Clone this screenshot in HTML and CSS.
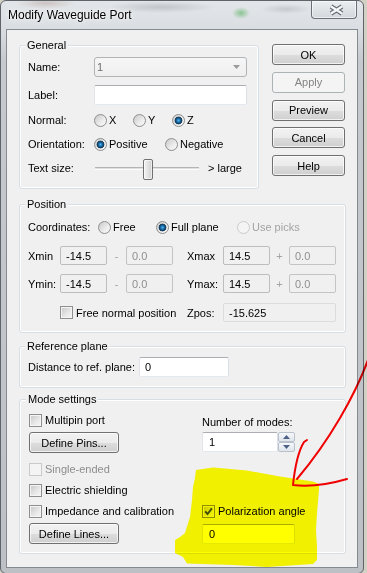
FILE: index.html
```html
<!DOCTYPE html>
<html>
<head>
<meta charset="utf-8">
<title>Modify Waveguide Port</title>
<link rel="stylesheet" href="styles.css">
</head>
<body>
<div class="window">
  <div class="titlebar">
    <span class="title">Modify Waveguide Port</span>
    <div class="close">
      <svg width="17" height="12" viewBox="0 0 17 12"><path d="M3 2.5 L14 9.5 M14 2.5 L3 9.5" stroke="#676c72" stroke-width="4.6" fill="none"/><path d="M3 2.5 L14 9.5 M14 2.5 L3 9.5" stroke="#f7f8f9" stroke-width="2.2" fill="none"/></svg>
    </div>
  </div>
  <div class="client">
    <div class="top-row">
      <div class="group general">
        <div class="group-title">General</div>
        <div class="row r-name">
          <span class="lbl">Name:</span>
          <div class="combo"><span>1</span><svg width="7" height="4" viewBox="0 0 7 4"><path d="M0 0 L7 0 L3.5 4 Z" fill="#9c9c9c"/></svg></div>
        </div>
        <div class="row r-label">
          <span class="lbl">Label:</span>
          <div class="textbox label-input"></div>
        </div>
        <div class="row r-normal">
          <span class="lbl">Normal:</span>
          <span class="opt w39"><span class="radio"></span>X</span>
          <span class="opt w39"><span class="radio"></span>Y</span>
          <span class="opt"><span class="radio checked"></span>Z</span>
        </div>
        <div class="row r-orient">
          <span class="lbl">Orientation:</span>
          <span class="opt w71"><span class="radio checked"></span>Positive</span>
          <span class="opt"><span class="radio"></span>Negative</span>
        </div>
        <div class="row r-text">
          <span class="lbl">Text size:</span>
          <div class="slider"><div class="groove"></div><div class="thumb"></div></div>
          <span class="slider-note">&gt; large</span>
        </div>
      </div>
      <div class="buttons">
        <div class="btn">OK</div>
        <div class="btn disabled">Apply</div>
        <div class="btn">Preview</div>
        <div class="btn">Cancel</div>
        <div class="btn">Help</div>
      </div>
    </div>

    <div class="group position">
      <div class="group-title">Position</div>
      <div class="row coords">
        <span class="lbl-c">Coordinates:</span>
        <span class="opt w58"><span class="radio"></span>Free</span>
        <span class="opt w81"><span class="radio checked"></span>Full plane</span>
        <span class="opt dim"><span class="radio disabled"></span>Use picks</span>
      </div>
      <div class="pos-row r-x">
        <span>Xmin</span>
        <div class="field">-14.5</div>
        <span class="sep">-</span>
        <div class="field dis">0.0</div>
        <span></span>
        <span>Xmax</span>
        <div class="field">14.5</div>
        <span class="sep">+</span>
        <div class="field dis">0.0</div>
      </div>
      <div class="pos-row r-y">
        <span>Ymin:</span>
        <div class="field">-14.5</div>
        <span class="sep">-</span>
        <div class="field dis">0.0</div>
        <span></span>
        <span>Ymax:</span>
        <div class="field">14.5</div>
        <span class="sep">+</span>
        <div class="field dis">0.0</div>
      </div>
      <div class="pos-row r-free">
        <span class="opt free-opt"><span class="check"></span>Free normal position</span>
        <span class="zpos-lbl">Zpos:</span>
        <div class="field ro">-15.625</div>
      </div>
    </div>

    <div class="group ref">
      <div class="group-title">Reference plane</div>
      <div class="row r-ref">
        <span class="lbl-r">Distance to ref. plane:</span>
        <div class="textbox ref-input">0</div>
      </div>
    </div>

    <div class="group mode">
      <div class="group-title">Mode settings</div>
      <div class="mode-body">
        <div class="mode-left">
          <span class="opt cb-row"><span class="check"></span>Multipin port</span>
          <div class="btn btn-define">Define Pins...</div>
          <span class="opt cb-row mt8 dim2"><span class="check disabled"></span>Single-ended</span>
          <span class="opt cb-row mt5"><span class="check"></span>Electric shielding</span>
          <span class="opt cb-row mt5"><span class="check"></span>Impedance and calibration</span>
          <div class="btn btn-define mt4">Define Lines...</div>
        </div>
        <div class="mode-right">
          <div class="nm-label">Number of modes:</div>
          <div class="spin">
            <div class="textbox spin-input">1</div>
            <div class="spin-btns">
              <div class="spin-btn"><svg width="7" height="4" viewBox="0 0 7 4"><path d="M0 4 L3.5 0 L7 4 Z" fill="#4e6287"/></svg></div>
              <div class="spin-btn"><svg width="7" height="4" viewBox="0 0 7 4"><path d="M0 0 L7 0 L3.5 4 Z" fill="#4e6287"/></svg></div>
            </div>
          </div>
          <span class="opt cb-row pol"><span class="check"><svg width="9" height="9" viewBox="0 0 9 9"><path d="M1.2 4.4 L3.5 7 L7.9 1.4" stroke="#3f4f46" stroke-width="1.9" fill="none"/></svg></span>Polarization angle</span>
          <div class="textbox pol-input">0</div>
        </div>
      </div>
    </div>
  </div>
</div>

<svg class="overlay" width="367" height="573" viewBox="0 0 367 573">
  <path d="M196,470 L213,467.5 L247,470.5 L280,476.5 L313,481.5 L319,484 L319,490 L317,513 L316,530 L317,547 L317,560 L313,564 L267,567 L233,565 L187,563.5 L183,557 L175,553 L175,540 L180,537 L185,533 L190,517 L192,500 L193,487 L195,478 Z" fill="#ffff00"/>
  <path d="M368,360 C355,395 330,440 297,479" stroke="#ff0000" stroke-width="2" fill="none" stroke-linecap="round"/>
  <path d="M307,440 L304,442 C299,450 295,466 293,485 C310,487 330,484 347,479" stroke="#ff0000" stroke-width="2" fill="none" stroke-linecap="round" stroke-linejoin="round"/>
</svg>
</body>
</html>
```

FILE: styles.css
```css
* { box-sizing: border-box; }
html, body { margin: 0; padding: 0; }
body {
  width: 367px;
  height: 573px;
  overflow: hidden;
  position: relative;
  background: #d3d0c4;
  font-family: "Liberation Sans", Arial, sans-serif;
  font-size: 11px;
  color: #000;
}

.window {
  width: 364px;
  height: 574px;
  border: 1px solid #5f646a;
  border-radius: 6px;
  display: flex;
  flex-direction: column;
  background:
    radial-gradient(ellipse 30px 6px at 45px 2px, rgba(150, 115, 105, 0.30), rgba(150, 115, 105, 0)),
    radial-gradient(ellipse 55px 6px at 160px 6px, rgba(120, 125, 130, 0.30), rgba(120, 125, 130, 0)),
    radial-gradient(ellipse 9px 6px at 240px 12px, rgba(70, 170, 80, 0.55), rgba(70, 170, 80, 0)),
    radial-gradient(ellipse 25px 5px at 285px 8px, rgba(130, 135, 140, 0.28), rgba(130, 135, 140, 0)),
    linear-gradient(180deg, #e3e6e9 0, #dadee2 28px, #c6cacf 60px, #bdc1c5 100%);
}

.titlebar {
  flex: none;
  height: 28px;
  display: flex;
  align-items: flex-start;
}
.title {
  padding-left: 7px;
  line-height: 28px;
  font-size: 12px;
  color: #000;
  text-shadow: 0 0 7px #fff, 0 0 3px rgba(255, 255, 255, 0.8);
}
.close {
  margin-left: auto;
  margin-right: 6px;
  width: 46px;
  height: 18px;
  border: 1px solid #6c7177;
  border-top: none;
  border-radius: 0 0 4px 4px;
  background: linear-gradient(180deg, #eceef0, #d3d7db);
  box-shadow: inset 0 0 0 1px rgba(255, 255, 255, 0.55);
  display: flex;
  align-items: center;
  justify-content: center;
  padding: 1px 0 0 4px;
}

.client {
  flex: none;
  height: 539px;
  margin: 0 5px;
  border: 1px solid #858a90;
  background: #f0f0f0;
  padding: 0 11px 0 12px;
}

.top-row { display: flex; align-items: flex-start; }

.group {
  border: 1px solid #d5dfe5;
  border-radius: 3px;
  box-shadow: inset 0 0 0 1px #fff;
  padding: 0 8px 0 8px;
}
.group-title {
  width: max-content;
  height: 14px;
  line-height: 14px;
  margin: -8px 0 0 -3px;
  padding: 0 2px;
  background: #f0f0f0;
}

.general { width: 240px; margin-top: 15px; padding-bottom: 9px; }

.buttons {
  width: 73px;
  margin-left: 13px;
  margin-top: 14px;
  display: flex;
  flex-direction: column;
  gap: 6.8px;
}
.btn {
  height: 21px;
  border: 1px solid #707070;
  border-radius: 3px;
  background: linear-gradient(180deg, #f2f2f2 0%, #ebebeb 50%, #dddddd 51%, #cfcfcf 100%);
  box-shadow: inset 0 0 0 1px rgba(255, 255, 255, 0.7);
  display: flex;
  align-items: center;
  justify-content: center;
  white-space: nowrap;
}
.btn.disabled {
  border-color: #adb2b5;
  background: #f4f4f4;
  color: #838383;
  box-shadow: none;
}

.row { display: flex; align-items: center; }
.lbl { width: 66px; flex: none; }
.r-name { height: 20px; margin-top: 5px; }
.r-label { height: 20px; margin-top: 8px; }
.r-normal { height: 20px; margin-top: 5px; }
.r-orient { height: 20px; margin-top: 4px; }
.r-text { height: 22px; margin-top: 3px; }

.combo {
  width: 153px;
  height: 20px;
  border: 1px solid #b1b4b7;
  border-radius: 3px;
  background: linear-gradient(180deg, #f6f6f6, #efefef);
  color: #6d6d6d;
  display: flex;
  align-items: center;
  justify-content: space-between;
  padding: 0 6px 0 2px;
}
.textbox {
  height: 20px;
  border: 1px solid;
  border-color: #abadb3 #dbdfe6 #e3e9ef #e2e3ea;
  border-radius: 2px;
  background: #fff;
  display: flex;
  align-items: center;
  padding-left: 5px;
}
.label-input { width: 153px; }

.opt { display: inline-flex; align-items: center; flex: none; white-space: nowrap; }
.w39 { width: 39px; }
.w71 { width: 71px; }
.w58 { width: 58px; }
.w81 { width: 81px; }
.dim { color: #a3a3a3; }
.dim2 { color: #8d8d8d; }

.radio {
  flex: none;
  width: 13px;
  height: 13px;
  border-radius: 50%;
  border: 1px solid #8c8e90;
  background: linear-gradient(135deg, #c9c9c9 0%, #ececec 60%, #fbfbfb 100%);
  margin-right: 2px;
}
.radio.checked {
  background:
    radial-gradient(circle at 50% 50%, #56b8ec 0, #1e74b2 1.6px, #0c416d 3.1px, #3d4c58 3.7px, rgba(60, 70, 80, 0) 4.2px),
    linear-gradient(135deg, #c9c9c9 0%, #ececec 60%, #fbfbfb 100%);
}
.radio.disabled {
  border-color: #cbcbcb;
  background: #f4f4f4;
}

.check {
  flex: none;
  width: 13px;
  height: 13px;
  border: 1px solid #8e8f8f;
  background: linear-gradient(135deg, #c6c6c6 0%, #e8e8e8 60%, #f6f6f6 100%);
  box-shadow: inset 0 0 0 1px #f4f4f4;
  margin-right: 3px;
  display: flex;
  align-items: center;
  justify-content: center;
}
.check.disabled {
  border-color: #cacaca;
  background: #f4f4f4;
  box-shadow: none;
}

.slider {
  position: relative;
  width: 104px;
  height: 22px;
  margin-left: 1px;
  display: flex;
  align-items: center;
}
.groove {
  flex: 1;
  height: 3px;
  border-top: 1px solid #b4b4b4;
  border-bottom: 1px solid #fcfcfc;
  background: #e0e0e0;
}
.thumb {
  position: absolute;
  left: 48px;
  top: 2px;
  width: 10px;
  height: 21px;
  border: 1px solid #707070;
  border-radius: 2px;
  background: linear-gradient(90deg, #f4f4f4, #dedede 60%, #d0d0d0);
  box-shadow: inset 0 0 0 1px rgba(255, 255, 255, 0.6);
}
.slider-note { margin-left: 9px; }

.position { margin-top: 15px; padding-bottom: 10px; }
.coords { height: 16px; margin-top: 8px; }
.lbl-c { width: 70px; flex: none; }

.pos-row {
  display: grid;
  grid-template-columns: 32px 47px 19px 47px 14px 36px 47px 19px 47px;
  height: 19px;
  align-items: center;
}
.r-x { margin-top: 11px; }
.r-y { margin-top: 9px; }
.r-free { margin-top: 10px; }
.field {
  height: 19px;
  border: 1px solid #bdbdbd;
  border-radius: 2px;
  background: #f0f0f0;
  padding-left: 5px;
  display: flex;
  align-items: center;
}
.field.dis { color: #8f8f8f; border-color: #c4c4c4; }
.field.ro { border-color: #dcdcdc; grid-column: 7 / 10; }
.sep { text-align: center; color: #a3a3a3; }
.free-opt { grid-column: 2 / 6; }
.zpos-lbl { grid-column: 6; }

.ref { margin-top: 13px; padding-bottom: 10px; }
.r-ref { height: 20px; margin-top: 4px; }
.lbl-r { width: 111px; flex: none; }
.ref-input { width: 90px; }

.mode { margin-top: 11px; padding-left: 9px; padding-bottom: 9px; }
.mode-body { display: flex; margin-top: 6px; }
.mode-left {
  width: 173px;
  display: flex;
  flex-direction: column;
  align-items: flex-start;
}
.cb-row { height: 16px; }
.btn-define { width: 90px; margin-top: 4px; }
.mt8 { margin-top: 8px; }
.mt5 { margin-top: 5px; }
.mt4 { margin-top: 4px; }

.mode-right {
  width: 93px;
  display: flex;
  flex-direction: column;
}
.nm-label { height: 16px; line-height: 16px; margin-top: 2px; }
.spin { display: flex; height: 20px; margin-top: 2px; }
.spin-input { flex: 1; padding-left: 6px; }
.spin-btns { width: 17px; display: flex; flex-direction: column; }
.spin-btn {
  flex: 1;
  border: 1px solid #b9c1cb;
  border-radius: 2px;
  background: linear-gradient(180deg, #f5f7fa, #dfe5ec);
  display: flex;
  align-items: center;
  justify-content: center;
}
.pol { margin-top: auto; margin-bottom: 5px; }
.pol-input { width: 93px; padding-left: 6px; }

.overlay {
  position: absolute;
  left: 0;
  top: 0;
  pointer-events: none;
  mix-blend-mode: multiply;
}
```
